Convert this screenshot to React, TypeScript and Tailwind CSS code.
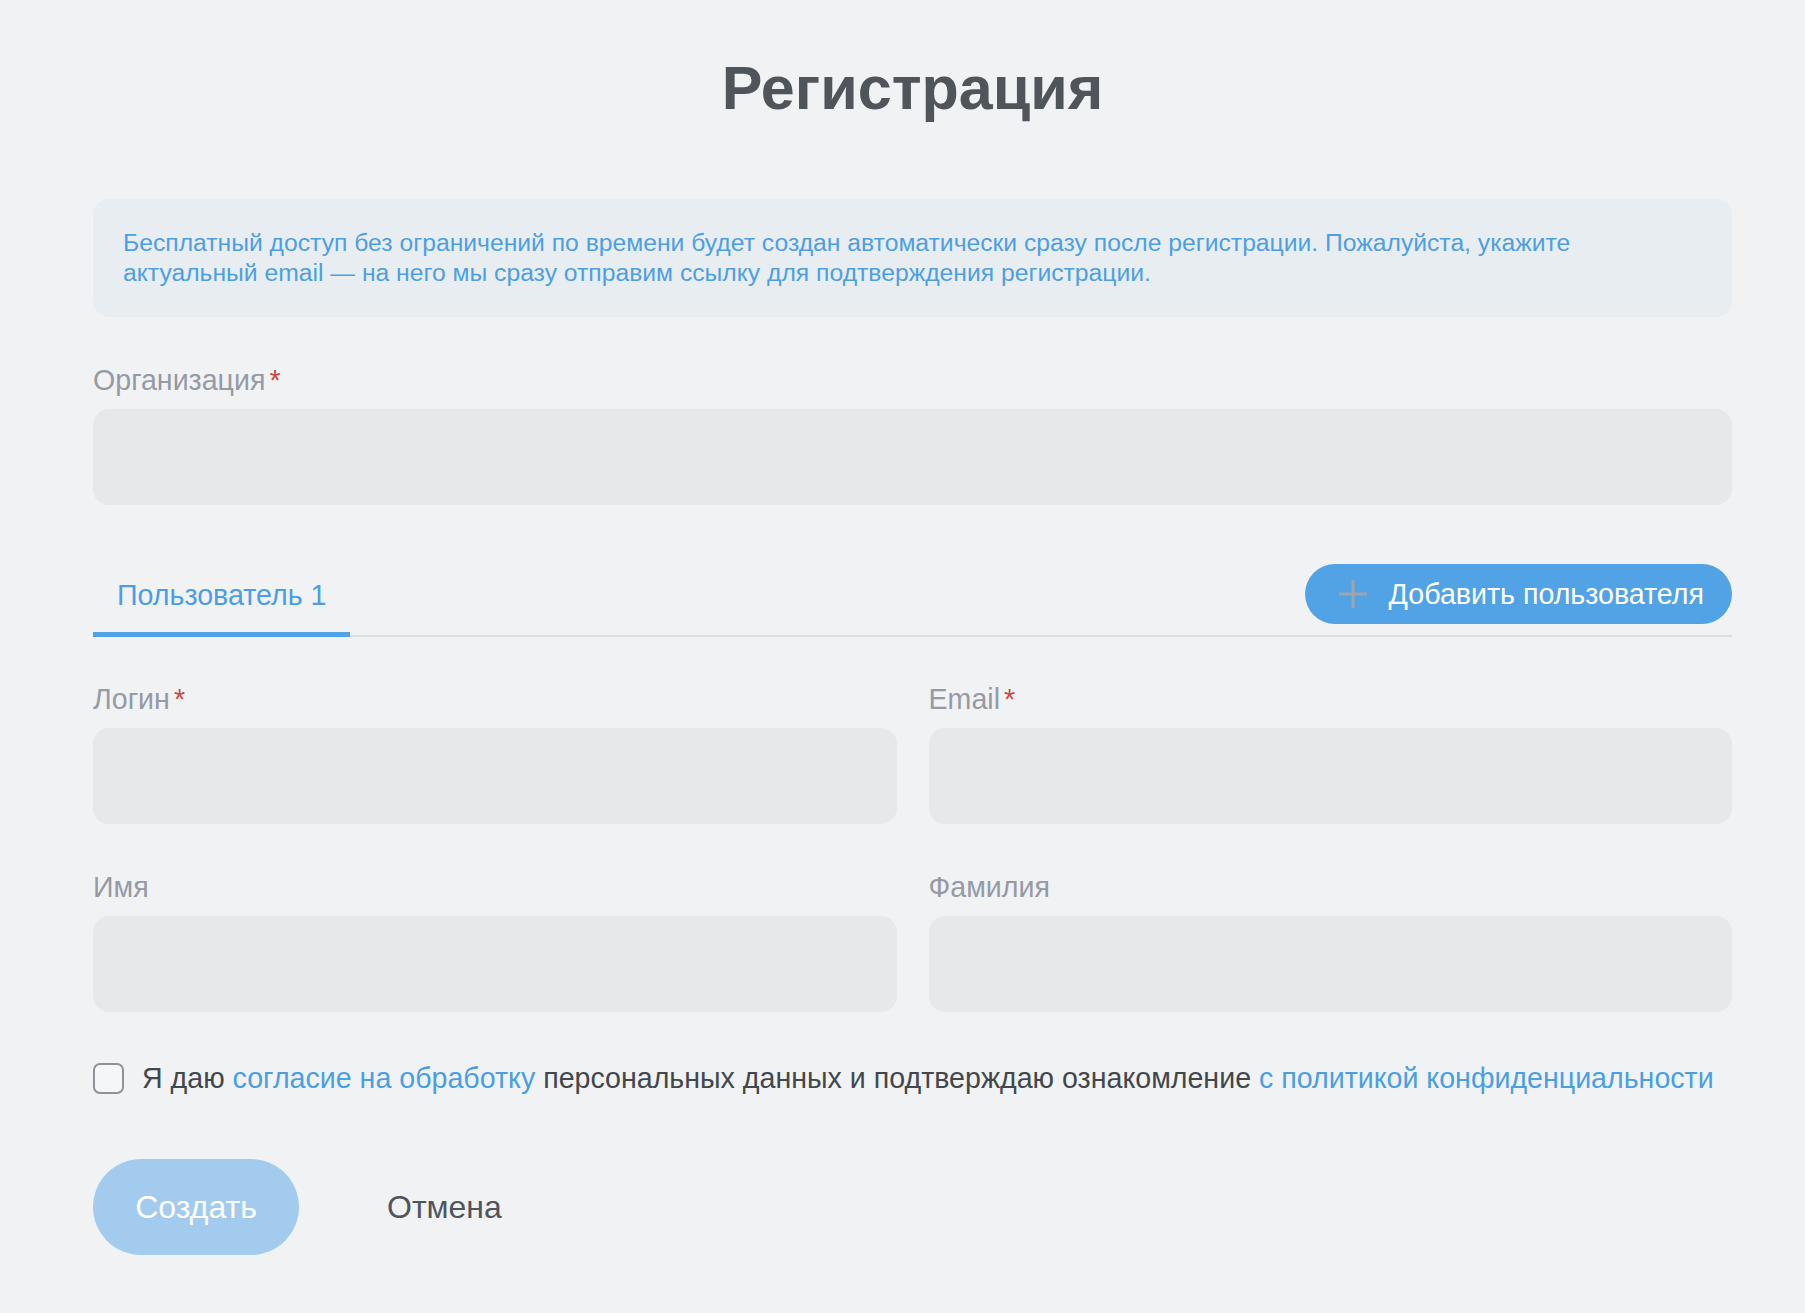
import { useState } from 'react';

const font = { fontFamily: '"Liberation Sans", Arial, Helvetica, sans-serif' };

function Label({ text, required }: { text: string; required?: boolean }) {
  return (
    <div className="h-[30px] text-[28.6px] leading-[30px] text-[#959aa4]">
      {text}
      {required && <span className="ml-[4px] text-[#d04a46]">*</span>}
    </div>
  );
}

function Field({ label, required }: { label: string; required?: boolean }) {
  return (
    <div className="flex flex-col">
      <Label text={label} required={required} />
      <input
        type="text"
        className="mt-[14px] h-[96px] w-full rounded-[16px] bg-[#e7e8ea] px-[24px] text-[28px] text-[#42474d] outline-none"
      />
    </div>
  );
}

function PlusIcon() {
  return (
    <svg width="30" height="30" viewBox="0 0 30 30" fill="none">
      <path d="M15 1v28M1 15h28" stroke="#a0a4ab" strokeWidth="3" />
    </svg>
  );
}

export default function App() {
  const [agreed, setAgreed] = useState(false);

  return (
    <div className="min-h-[1313px] bg-[#f1f2f4] pb-[58px]" style={font}>
      <div className="ml-[93px] w-[1639px]">
        <h1 className="pt-[57px] pb-[3px] text-center text-[61px] font-bold leading-[62px] text-[#4f555b]">
          Регистрация
        </h1>

        <div className="mt-[77px] flex h-[118px] items-center rounded-[16px] bg-[#e8edf2] px-[30px]">
          <p className="text-[24.7px] leading-[30px] text-[#4d9fe4]">
            Бесплатный доступ без ограничений по времени будет создан автоматически сразу после регистрации. Пожалуйста, укажите
            <br />
            актуальный email — на него мы сразу отправим ссылку для подтверждения регистрации.
          </p>
        </div>

        <div className="mt-[48px]">
          <Field label="Организация" required />
        </div>

        {/* user tabs */}
        <div className="mt-[59px] flex h-[73px] items-start justify-between border-b-2 border-[#dcdde0]">
          <div className="-mb-[2px] h-[73px] border-b-[5px] border-[#52a3e5] px-[24px] pt-[17px] text-[28.6px] leading-[28px] text-[#4c9ee4]">
            Пользователь 1
          </div>
          <button
            type="button"
            className="flex h-[60px] items-center gap-[21px] rounded-full bg-[#52a3e5] pl-[33px] pr-[28px] text-[28.6px] text-white"
          >
            <PlusIcon />
            Добавить пользователя
          </button>
        </div>

        <div className="mt-[47px] grid grid-cols-2 gap-x-[32px] gap-y-[48px]">
          <Field label="Логин" required />
          <Field label="Email" required />
          <Field label="Имя" />
          <Field label="Фамилия" />
        </div>

        <label className="mt-[50px] flex items-center gap-[18px] text-[28.6px] leading-[32px] text-[#42474d]">
          <input
            type="checkbox"
            checked={agreed}
            onChange={(e) => setAgreed(e.target.checked)}
            className="h-[31px] w-[31px] shrink-0 appearance-none rounded-[7px] border-[2.5px] border-[#8e929b] bg-[#f5f6f7]"
          />
          <span className="whitespace-nowrap">
            Я даю <span className="text-[#4a9fe3]">согласие на обработку</span> персональных данных и подтверждаю ознакомление{' '}
            <span className="text-[#4a9fe3]">с политикой конфиденциальности</span>
          </span>
        </label>

        <div className="mt-[65px] flex items-center gap-[88px]">
          <button
            type="button"
            className="h-[96px] w-[206px] rounded-full bg-[#a3cbee] text-[32px] text-white"
          >
            Создать
          </button>
          <button type="button" className="text-[32px] text-[#4f555c]">
            Отмена
          </button>
        </div>
      </div>
    </div>
  );
}
